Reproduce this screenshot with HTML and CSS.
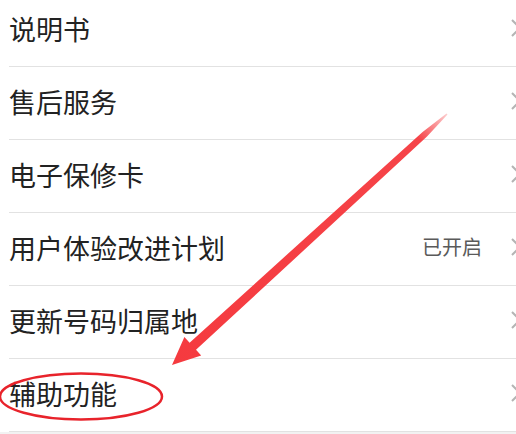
FILE: index.html
```html
<!DOCTYPE html>
<html lang="zh-CN">
<head>
<meta charset="utf-8">
<link rel="stylesheet" href="styles.css">
</head>
<body>
<div class="screen">
  <ul class="list">
    <li class="row"><span class="label">说明书</span><span class="spacer"></span><svg class="chev" viewBox="0 0 10 18"><path d="M1 1 L9 9 L1 17"/></svg></li>
    <li class="row"><span class="label">售后服务</span><span class="spacer"></span><svg class="chev" viewBox="0 0 10 18"><path d="M1 1 L9 9 L1 17"/></svg></li>
    <li class="row"><span class="label">电子保修卡</span><span class="spacer"></span><svg class="chev" viewBox="0 0 10 18"><path d="M1 1 L9 9 L1 17"/></svg></li>
    <li class="row"><span class="label">用户体验改进计划</span><span class="spacer"></span><span class="value">已开启</span><svg class="chev" viewBox="0 0 10 18"><path d="M1 1 L9 9 L1 17"/></svg></li>
    <li class="row"><span class="label">更新号码归属地</span><span class="spacer"></span><svg class="chev" viewBox="0 0 10 18"><path d="M1 1 L9 9 L1 17"/></svg></li>
    <li class="row"><span class="label">辅助功能</span><span class="spacer"></span><svg class="chev" viewBox="0 0 10 18"><path d="M1 1 L9 9 L1 17"/></svg></li>
  </ul>
  <svg class="annot" viewBox="0 0 516 434" width="516" height="434">
    <defs>
      <linearGradient id="fade" gradientUnits="userSpaceOnUse" x1="447" y1="114" x2="172" y2="365">
        <stop offset="0" stop-color="#f53a3f" stop-opacity="0.25"/>
        <stop offset="0.1" stop-color="#f53a3f" stop-opacity="0.95"/>
        <stop offset="1" stop-color="#f53a3f"/>
      </linearGradient>
    </defs>
    <polygon fill="url(#fade)" points="447.5,114.5 427,136.6 196,349.8 201.2,355.4 172,365 184.4,337 189.6,342.7 422.6,131.9 446.5,113.5"/>
    <ellipse cx="81" cy="396.5" rx="81" ry="23" fill="none" stroke="#e8232b" stroke-width="2.5"/>
  </svg>
</div>
</body>
</html>
```

FILE: styles.css
```css
html, body {
  margin: 0;
  padding: 0;
  overflow: hidden;
  background: #f2f2f2;
}
.screen {
  position: relative;
  width: 516px;
  height: 434px;
  overflow: hidden;
}
.list {
  list-style: none;
  margin: -6px 0 0 0;
  padding: 0 0 0 9px;
  width: 521px;
  background: #ffffff;
  font-family: "Noto Sans CJK SC", "Noto Sans", sans-serif;
}
.row {
  display: flex;
  align-items: center;
  height: 72px;
  border-bottom: 1px solid #e2e2e2;
  padding-right: 9px;
}
.label {
  font-size: 27px;
  line-height: 1;
  color: #222222;
  position: relative;
  top: -2px;
}
.spacer {
  flex: 1;
}
.value {
  font-size: 20px;
  line-height: 1;
  color: #5a5a5a;
  margin-right: 29px;
  position: relative;
  top: -2px;
}
.chev {
  width: 10px;
  height: 18px;
  flex: none;
  position: relative;
  top: -2px;
}
.chev path {
  fill: none;
  stroke: #b4b4b4;
  stroke-width: 2;
}
.annot {
  position: absolute;
  left: 0;
  top: 0;
}
```
